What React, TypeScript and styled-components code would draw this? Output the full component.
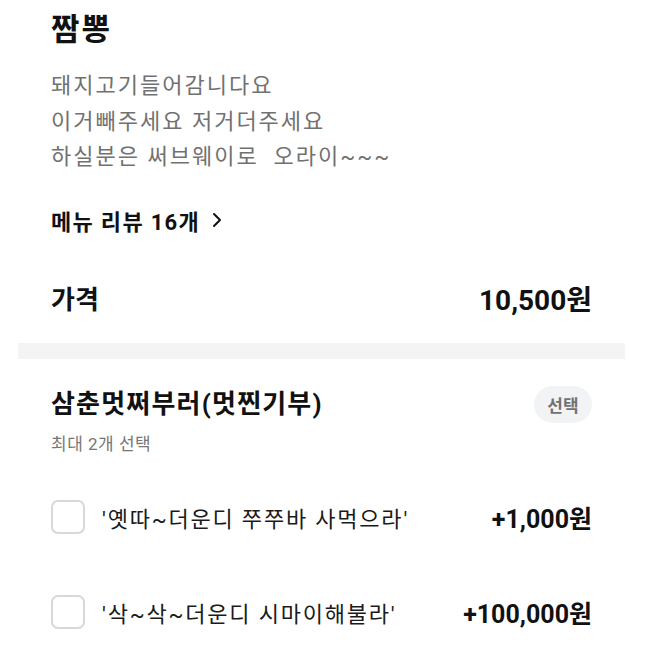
import React from "react";
import styled, { createGlobalStyle } from "styled-components";

const Global = createGlobalStyle`
  html, body { margin: 0; padding: 0; background: #fff; }
  body { font-family: Roboto, "Noto Sans CJK KR", sans-serif; color: #1a1a1a; }
  * { box-sizing: border-box; }
`;

const Page = styled.div`
  width: 658px;
  padding: 0 33px 0 18px;
`;

const Section = styled.section`
  padding: 0 33px;
`;

const Title = styled.h1`
  margin: 0;
  padding-top: 10px;
  font-size: 31px;
  line-height: 39px;
  letter-spacing: 2px;
  font-weight: 700;
  color: #111;
`;

const Description = styled.p`
  margin: 19px 0 0;
  font-size: 22px;
  line-height: 35.5px;
  letter-spacing: 2px;
  font-weight: 400;
  color: #717171;
  white-space: pre-wrap;
`;

const ReviewLink = styled.a`
  display: flex;
  align-items: center;
  gap: 12px;
  margin-top: 29px;
  height: 32px;
  font-size: 22px;
  letter-spacing: 1.3px;
  font-weight: 700;
  color: #111;
  text-decoration: none;
`;

const PriceRow = styled.div`
  display: flex;
  justify-content: space-between;
  align-items: center;
  height: 40px;
  margin-top: 42px;
`;

const PriceLabel = styled.span`
  font-size: 26px;
  font-weight: 700;
  color: #111;
`;

const PriceValue = styled.span`
  font-size: 28px;
  font-weight: 700;
  color: #111;
`;

const Band = styled.div`
  height: 16px;
  margin-top: 25px;
  background: #f4f4f4;
`;

const GroupHeader = styled.div`
  display: flex;
  justify-content: space-between;
  align-items: center;
  margin-top: 27px;
`;

const GroupTitle = styled.h2`
  margin: 0;
  font-size: 26px;
  line-height: 37px;
  letter-spacing: 1.2px;
  font-weight: 700;
  color: #111;
`;

const Pill = styled.span`
  display: inline-flex;
  align-items: center;
  justify-content: center;
  width: 58px;
  height: 37px;
  border-radius: 19px;
  background: #f2f3f5;
  color: #727272;
  font-size: 17px;
  font-weight: 700;
`;

const GroupSub = styled.div`
  margin-top: 10px;
  font-size: 17px;
  line-height: 22px;
  letter-spacing: 0.5px;
  color: #777;
`;

const OptionList = styled.ul`
  list-style: none;
  margin: 45px 0 0;
  padding: 0;
  display: flex;
  flex-direction: column;
  gap: 61px;
`;

const OptionRow = styled.li`
  display: flex;
  align-items: center;
  height: 34px;
`;

const Check = styled.span`
  width: 34px;
  height: 34px;
  border: 2.5px solid #d8d8d8;
  border-radius: 7px;
  flex-shrink: 0;
`;

const OptionName = styled.span`
  flex: 1;
  margin-left: 17px;
  font-size: 22px;
  letter-spacing: 1.8px;
  color: #1a1a1a;
`;

const OptionPrice = styled.span`
  font-size: 25px;
  font-weight: 700;
  color: #111;
`;

const Chevron = () => (
  <svg width="10" height="16" viewBox="0 0 10 16" fill="none">
    <path d="M2 2l6 6-6 6" stroke="#111" strokeWidth="2" strokeLinecap="round" strokeLinejoin="round" />
  </svg>
);

const options = [
  { name: "'옛따~더운디 쭈쭈바 사먹으라'", price: "+1,000원" },
  { name: "'삭~삭~더운디 시마이해불라'", price: "+100,000원" },
];

export default function App() {
  return (
    <Page>
      <Global />
      <Section>
        <Title>짬뽕</Title>
        <Description>{"돼지고기들어감니다요\n이거빼주세요 저거더주세요\n하실분은 써브웨이로  오라이~~~"}</Description>
        <ReviewLink href="#">
          메뉴 리뷰 16개 <Chevron />
        </ReviewLink>
        <PriceRow>
          <PriceLabel>가격</PriceLabel>
          <PriceValue>10,500원</PriceValue>
        </PriceRow>
      </Section>
      <Band />
      <Section>
        <GroupHeader>
          <GroupTitle>삼춘멋쩌부러(멋찐기부)</GroupTitle>
          <Pill>선택</Pill>
        </GroupHeader>
        <GroupSub>최대 2개 선택</GroupSub>
        <OptionList>
          {options.map((o) => (
            <OptionRow key={o.name}>
              <Check />
              <OptionName>{o.name}</OptionName>
              <OptionPrice>{o.price}</OptionPrice>
            </OptionRow>
          ))}
        </OptionList>
      </Section>
    </Page>
  );
}
